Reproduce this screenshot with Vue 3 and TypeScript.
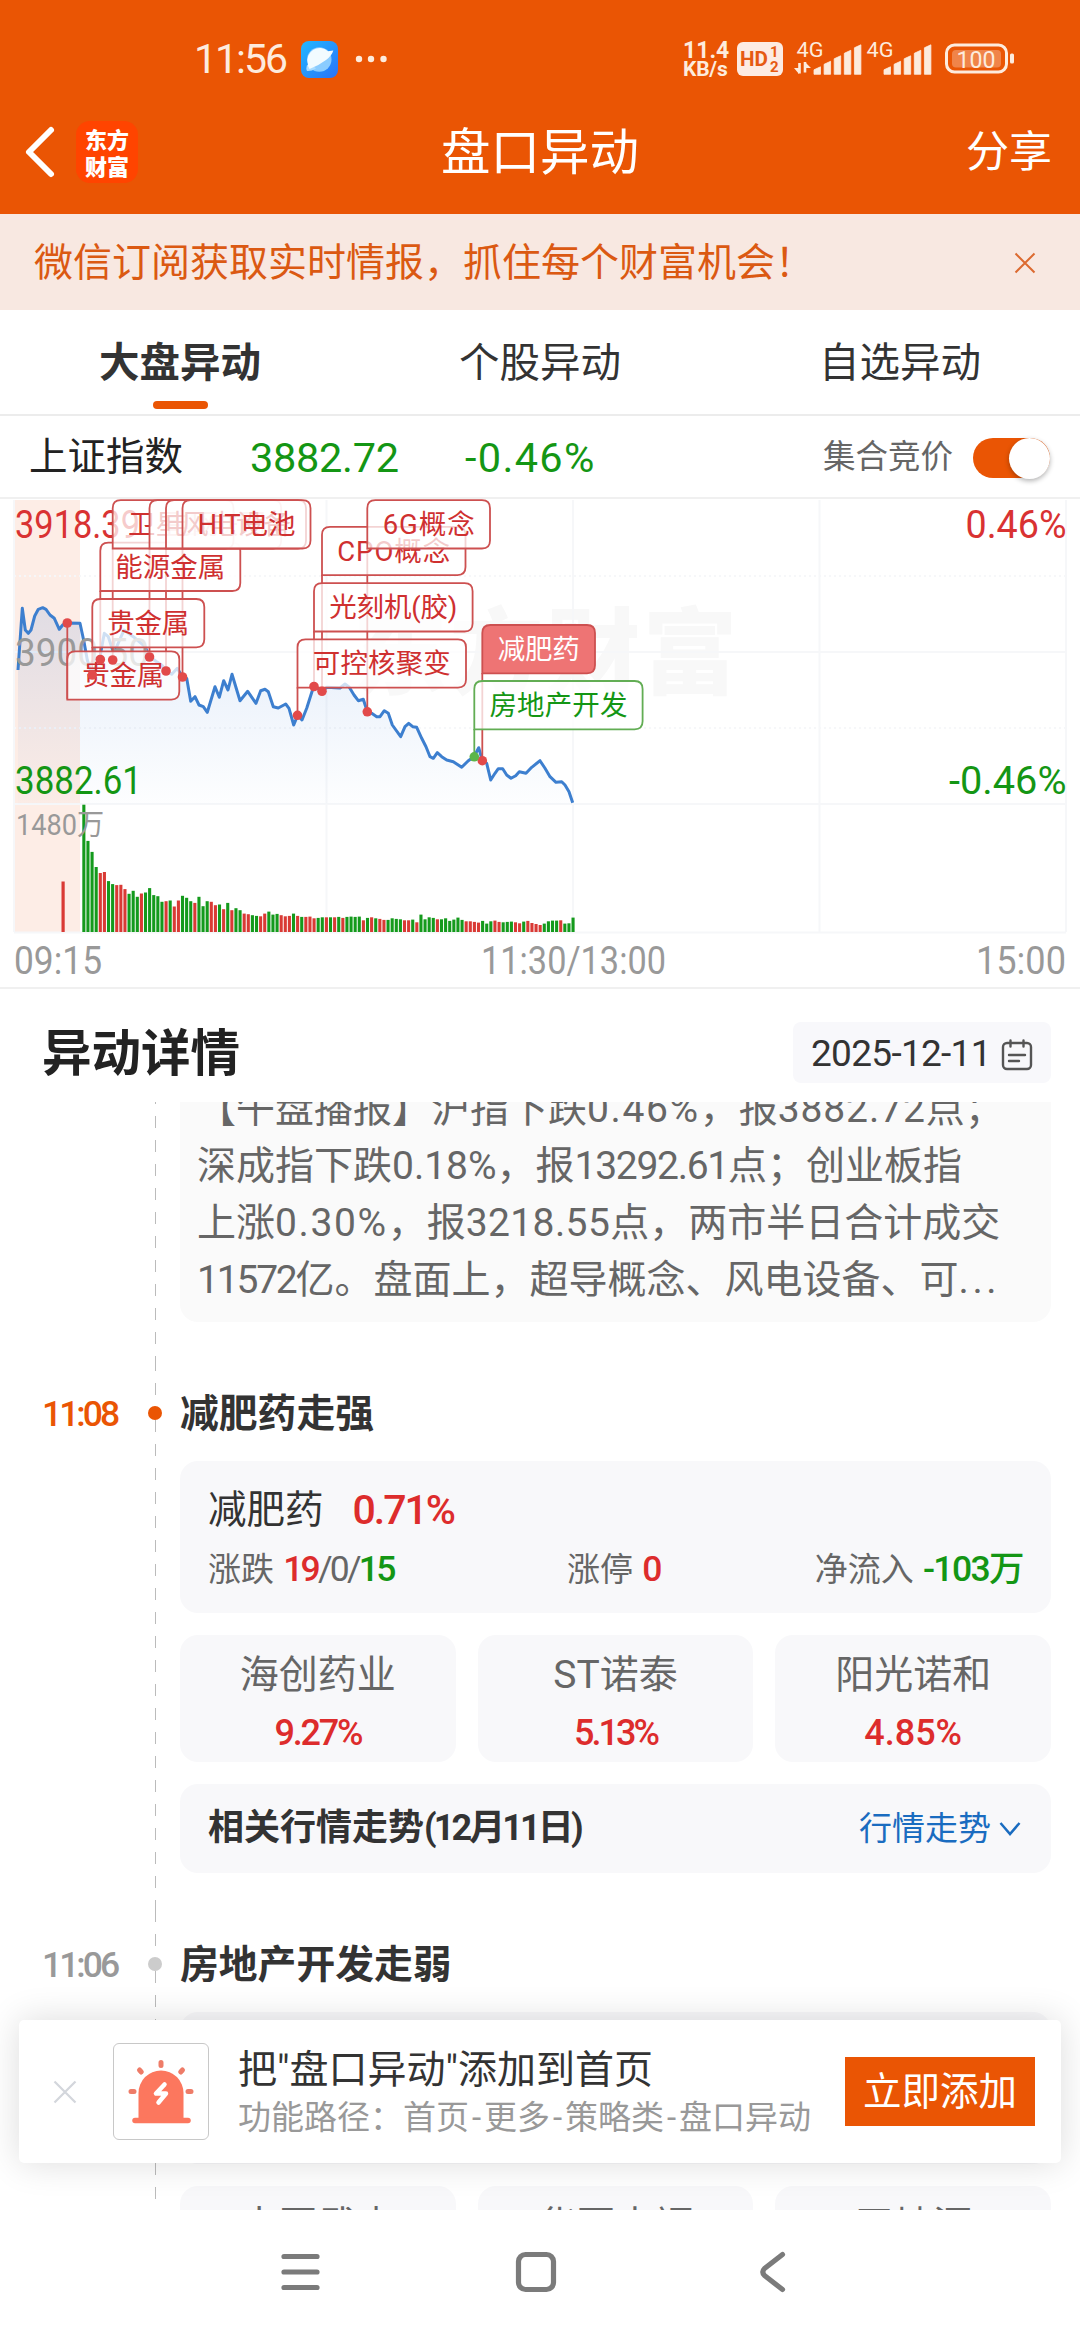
<script setup lang="ts">
interface Run { t: string; c?: string }
interface Tag { x: number; y: number; w: number; dy: number; label: string; tw: number; kind?: string }
interface Stock { name: string; pct?: string; c?: string }

const tabs = ['大盘异动', '个股异动', '自选异动']

const news: Run[][] = [
  [{ t: '【午盘播报】沪指下跌' }, { t: '0.46%', c: 'w2' }, { t: '，报' }, { t: '3882.72', c: 'w1' }, { t: '点；' }],
  [{ t: '深成指下跌0.18%，报' }, { t: '13292.61', c: 't1' }, { t: '点；创业板指' }],
  [{ t: '上涨' }, { t: '0.30%', c: 'w2' }, { t: '，报' }, { t: '3218.55', c: 'w0' }, { t: '点，两市半日合计成交' }],
  [{ t: '11572', c: 't2' }, { t: '亿。盘面上，超导概念、风电设备、可' }, { t: '...', c: 'w3' }],
]

const stocks: Stock[] = [
  { name: '海创药业', pct: '9.27%', c: 't2' },
  { name: 'ST诺泰', pct: '5.13%', c: 't3' },
  { name: '阳光诺和', pct: '4.85%', c: 't0' },
]
const weakStocks: Stock[] = [{ name: '中国武夷' }, { name: '华夏幸福' }, { name: '天地源' }]

// Intraday price, as x,y pairs in chart units
const pricePoints: number[][] = [
  [18, 180], [22.3, 118.3], [25.3, 140], [28.3, 143.3], [31, 140], [34.7, 126], [38.3, 119.3], [42.7, 117.7], [46, 119.3],
  [50, 125], [54.3, 128.3], [59.3, 139.3], [62.7, 135], [67.3, 133], [80, 133.3], [84, 151.7], [87.3, 170], [92, 185],
  [100, 166.7], [104.3, 143.3], [108.3, 146.7], [112.7, 160], [116.7, 156.7], [124, 140], [133.3, 146.7], [145, 156.7],
  [149.7, 166.7], [156.7, 171.7], [161.7, 175], [166, 180.3], [171.7, 184.3], [177.3, 178.3], [182.3, 186.7], [186.7, 188.3],
  [190.7, 211.3], [195, 206.7], [199, 215], [203.3, 216.7], [207.3, 222.3], [215, 196.7], [219.3, 207.3], [223.7, 190.7],
  [228, 200], [232, 184.3], [240, 210.7], [247.7, 201.3], [256, 213.3], [260.7, 200.7], [265, 199.3], [268.3, 201.7],
  [273.3, 216.7], [278.3, 218], [285.7, 214], [289, 218.3], [293.7, 235], [297.7, 225.3], [302, 230], [306.7, 218.3],
  [313.7, 196.3], [322, 201.3], [326.7, 197.3], [340, 198], [345, 194], [349.3, 197.3], [354, 205], [358.3, 210.7],
  [363.3, 209.3], [367.3, 221.7], [371.7, 223.3], [376.7, 226.7], [380, 226.7], [384.3, 220.7], [388.3, 223.3], [392.3, 235],
  [400.7, 246.7], [405, 236.7], [408.7, 233.3], [412.7, 236.7], [416.7, 237.3], [421.7, 248.3], [426, 256.7], [430, 266.7],
  [433.3, 268.3], [437.3, 262.7], [441.7, 266.7], [446.7, 270], [453.3, 271.7], [461.7, 277.3], [468.3, 270.7], [474, 266.7],
  [478.7, 257.7], [482.3, 270.7], [486.7, 273.3], [490.7, 290], [495, 283.3], [498.3, 278.7], [502.7, 278.7], [506.7, 285],
  [511, 288.3], [515.7, 285.7], [519.3, 281.7], [526, 283.3], [531.7, 277.3], [540, 270.7], [545, 278.3], [550, 286.7],
  [556, 292.3], [561.7, 291.7], [565, 295], [569, 301.7], [572.7, 312.7],
]
const priceLine = pricePoints.map((p) => p.join(',')).join(' ')
const priceArea = `18,314 ${priceLine} 572.7,314`

// Minute volumes: height in tenths of a pixel, with the direction of each bar
const volumes = [
  1273, 911, 801, 650, 590, 600, 509, 479, 469, 472, 429, 382, 412, 352, 385, 395, 439, 369, 358, 302, 308, 315, 255, 315,
  362, 342, 308, 291, 352, 258, 308, 302, 268, 275, 228, 291, 218, 238, 218, 184, 178, 168, 161, 157, 184, 204, 174, 181,
  168, 157, 161, 184, 161, 151, 151, 154, 137, 141, 147, 147, 147, 147, 151, 141, 151, 154, 151, 154, 117, 141, 147, 137,
  131, 121, 121, 137, 131, 127, 117, 117, 124, 97, 174, 127, 147, 141, 127, 127, 137, 111, 124, 144, 121, 107, 107, 101,
  94, 111, 84, 107, 114, 101, 97, 101, 104, 97, 87, 104, 111, 90, 80, 70, 84, 107, 114, 114, 117, 84, 87, 144,
]
const directions =
  'ggggrrggrrrgggrgggggrgrrgggrgggrrgrgrggrrggrrgggrrrgrgrrrggrgrgrggggrgrgrrggggrrgrggggrggggggrrrrgggrrgggrrgrrrrggggrggg'
const bars = volumes.map((v, i) => ({
  x: 82.3 + i * 4.111,
  h: v / 10,
  fill: directions[i] === 'r' ? '#d93a35' : '#149a1c',
}))

const tags: Tag[] = [
  { x: 67.3, y: 161.3, w: 112, dy: 133, label: '贵金属', tw: 82 },
  { x: 92.3, y: 109, w: 112, dy: 185, label: '贵金属', tw: 82 },
  { x: 100.3, y: 52.7, w: 140, dy: 169.5, label: '能源金属', tw: 110 },
  { x: 112.7, y: 10.2, w: 168.5, dy: 170, label: '卫星互联网', tw: 138 },
  { x: 149.5, y: 10.2, w: 84, dy: 167, label: '电网', tw: 55 },
  { x: 166, y: 10.2, w: 140, dy: 181, label: '风电设备', tw: 110 },
  { x: 182.5, y: 10.2, w: 128, dy: 187, label: 'HIT电池', tw: 98 },
  { x: 322, y: 36.8, w: 143.5, dy: 201.3, label: 'CPO概念', tw: 113 },
  { x: 314, y: 93.2, w: 158.6, dy: 196.5, label: '光刻机(胶)', tw: 128 },
  { x: 297.5, y: 149.3, w: 168.5, dy: 225.3, label: '可控核聚变', tw: 138 },
  { x: 367.3, y: 10.2, w: 122.7, dy: 221.8, label: '6G概念', tw: 92 },
  { x: 482.3, y: 135, w: 112.7, dy: 270.7, label: '减肥药', tw: 82, kind: 'solid' },
  { x: 474.3, y: 191, w: 168.3, dy: 266.8, label: '房地产开发', tw: 138, kind: 'green' },
]
const tagPath = (t: Tag): string => {
  const r = 8
  const h = 48.3
  return `M${t.x} ${t.y + h}V${t.y + r}q0 ${-r} ${r} ${-r}h${t.w - 2 * r}q${r} 0 ${r} ${r}v${h - 2 * r}q0 ${r} ${-r} ${r}Z`
}
const tagStroke = (t: Tag): string => (t.kind === 'green' ? '#62ad54' : '#cd5050')
const dotFill = (t: Tag): string => (t.kind === 'green' ? '#5bb548' : '#e24a4a')
const signal = [7.5, 13, 18.5, 24, 29.5]
</script>

<template>
  <div class="screen">
    <header class="top">
      <div class="status">
        <span class="clock">11:56</span>
        <svg class="planet" width="37" height="37" viewBox="0 0 37 37">
          <defs>
            <linearGradient id="sky" x1="0" y1="0" x2="1" y2="1">
              <stop offset="0" stop-color="#22b8ff" /><stop offset="1" stop-color="#2a72f8" />
            </linearGradient>
          </defs>
          <rect width="37" height="37" rx="8" fill="url(#sky)" />
          <circle cx="18.3" cy="18.5" r="12.2" fill="#8accff" />
          <path d="M5.8 24.5Q4.8 28 6 30Q10 30.5 15 27.5L9 22Z" fill="#a9dcff" />
          <path d="M6.8 22.5A12.3 12.3 0 0 1 27 10.2L32.3 9.5Q31 14.5 25 19Q17 25 8.5 28Q6.5 25 6.8 22.5Z" fill="#f2fbff" />
        </svg>
        <svg class="dots" width="32" height="8" viewBox="0 0 32 8" fill="#fdebdd">
          <circle cx="4" cy="4" r="3.2" /><circle cx="16" cy="4" r="3.2" /><circle cx="28.5" cy="4" r="3.2" />
        </svg>
        <div class="rate"><span>11.4</span><span class="unit">KB/s</span></div>
        <svg class="radio" width="286" height="40" viewBox="0 0 286 40" font-family="Roboto, sans-serif">
          <rect x="3" y="3" width="46" height="34" rx="6" fill="#fdebe2" />
          <g fill="#e65a12" font-weight="700">
            <text x="6" y="27" font-size="20" textLength="28" lengthAdjust="spacingAndGlyphs">HD</text>
            <text x="36" y="18" font-size="15">1</text>
            <text x="36" y="33" font-size="15">2</text>
          </g>
          <g v-for="o in [0, 70]" :key="o" fill="#fdebdd">
            <text :x="62.5 + o" y="18" font-size="21" textLength="27" lengthAdjust="spacingAndGlyphs">4G</text>
            <path
              v-for="(h, i) in signal"
              :key="i"
              :d="`M${80 + o + i * 10.1} ${35.3 - h + 3} l6.5 -3 v${h} h-6.5Z`"
              stroke="#fdebdd"
              stroke-width="0.8"
              stroke-linejoin="round"
            />
          </g>
          <path d="M65.5 24v10.5M71 23v10.5" stroke="#fdebdd" stroke-width="2.6" fill="none" />
          <path d="M60 29h5v6zM71 23l6 6h-5z" fill="#fdebdd" />
          <rect x="212.5" y="6" width="60" height="27" rx="8" fill="none" stroke="#fdebdd" stroke-width="3" />
          <rect x="218" y="11" width="49" height="17.5" rx="4" fill="#fff" fill-opacity="0.28" />
          <rect x="276" y="14.5" width="4" height="10" rx="1.5" fill="#fdebdd" />
          <text x="242" y="28.5" font-size="24" fill="#fdebdd" text-anchor="middle" textLength="39" lengthAdjust="spacingAndGlyphs">100</text>
        </svg>
      </div>
      <div class="titlebar">
        <div class="left">
          <svg width="34" height="54" viewBox="0 0 34 54">
            <path d="M28 5 L6 27 L28 49" fill="none" stroke="#fff" stroke-width="6" stroke-linecap="round" stroke-linejoin="round" />
          </svg>
          <div class="logo"><span>东方</span><span>财富</span></div>
        </div>
        <h1>盘口异动</h1>
        <span class="share">分享</span>
      </div>
    </header>

    <div class="notice">
      <span>微信订阅获取实时情报，抓住每个财富机会！</span>
      <svg width="22" height="22" viewBox="0 0 22 22"><path d="M1.5 1.5l19 19M20.5 1.5l-19 19" stroke="#dc6a30" stroke-width="2" /></svg>
    </div>

    <nav class="tabs">
      <div v-for="(t, i) in tabs" :key="t" class="tab" :class="{ on: i === 0 }">{{ t }}</div>
    </nav>

    <div class="index">
      <span class="iname">上证指数</span>
      <span class="ival">3882.72</span>
      <span class="ichg">-0.46%</span>
      <span class="auction">集合竞价</span>
      <span class="switch"><i></i></span>
    </div>

    <div class="chart">
      <svg width="1080" height="488" viewBox="0 0 1080 488" font-family="Roboto, 'Noto Sans CJK SC', sans-serif">
        <defs>
          <linearGradient id="fade" x1="0" y1="0" x2="0" y2="1">
            <stop offset="0" stop-color="#3f7fd8" stop-opacity="0.15" />
            <stop offset="1" stop-color="#3f7fd8" stop-opacity="0.01" />
          </linearGradient>
        </defs>
        <text x="353" y="197" font-size="94" font-weight="900" fill="#f8f8f8" textLength="384" font-family="'Noto Sans CJK SC', sans-serif">东方财富</text>
        <rect x="14" y="10" width="66" height="303" fill="#fdede6" />
        <rect x="14" y="315" width="66" height="127" fill="#fdede6" />
        <g stroke="#f6f7f9" stroke-width="2" fill="none">
          <path d="M14 10V442M326.5 10V442M573 10V442M819.5 10V442M1066 10V442" />
          <path d="M14 162H1066M14 314H1066M14 442.5H1066" />
          <path d="M14 86H1066M14 238H1066" stroke-dasharray="2 3" />
        </g>
        <polygon :points="priceArea" fill="url(#fade)" />
        <polyline :points="priceLine" fill="none" stroke="#3d7fcf" stroke-width="3" stroke-linejoin="round" />
        <g fill="#999" font-size="38">
          <text x="15" y="176" textLength="134" lengthAdjust="spacingAndGlyphs">3900.50</text>
          <text x="14" y="484" textLength="88" lengthAdjust="spacingAndGlyphs">09:15</text>
          <text x="481" y="484" textLength="185" lengthAdjust="spacingAndGlyphs">11:30/13:00</text>
          <text x="976" y="484" textLength="90" lengthAdjust="spacingAndGlyphs">15:00</text>
        </g>
        <g font-size="38.5">
          <text x="15" y="47.5" fill="#d93232" textLength="125" lengthAdjust="spacingAndGlyphs">3918.39</text>
          <text x="965.5" y="47.5" fill="#d93232" textLength="101" lengthAdjust="spacingAndGlyphs">0.46%</text>
          <text x="15" y="304" fill="#149614" textLength="127" lengthAdjust="spacingAndGlyphs">3882.61</text>
          <text x="949" y="304" fill="#149614" textLength="117.5" lengthAdjust="spacingAndGlyphs">-0.46%</text>
        </g>
        <rect x="61.5" y="391.5" width="3.2" height="50.5" fill="#d93a35" />
        <rect v-for="(b, i) in bars" :key="i" :x="b.x" :y="442 - b.h" width="3.1" :height="b.h" :fill="b.fill" />
        <text x="16" y="344.5" font-size="29" fill="#999" textLength="88" lengthAdjust="spacingAndGlyphs">1480万</text>

        <path v-for="(t, i) in tags" :key="'s' + i" :d="`M${t.x} ${t.y + 48}V${t.dy}`" :stroke="tagStroke(t)" stroke-width="1.8" />
        <g v-for="(t, i) in tags" :key="'t' + i">
          <path
            :d="tagPath(t)"
            :fill="t.kind === 'solid' ? '#ee7474' : '#fff'"
            :fill-opacity="t.kind === 'solid' ? 1 : 0.75"
            :stroke="tagStroke(t)"
            stroke-width="1.8"
          />
          <text
            :x="t.x + t.w / 2"
            :y="t.y + 34"
            font-size="27.5"
            text-anchor="middle"
            :textLength="t.tw"
            :fill="t.kind === 'solid' ? '#fff' : t.kind === 'green' ? '#149614' : '#cf3030'"
          >{{ t.label }}</text>
        </g>
        <circle v-for="(t, i) in tags" :key="'d' + i" :cx="t.x" :cy="t.dy" r="4.8" :fill="dotFill(t)" />
      </svg>
    </div>

    <div class="dhead">
      <h2>异动详情</h2>
      <div class="date">
        <span>2025-12-11</span>
        <svg width="32" height="32" viewBox="0 0 32 32" fill="none" stroke="#555" stroke-width="2.4" stroke-linecap="round">
          <rect x="2" y="4" width="28" height="26" rx="4" />
          <path d="M9.5 1.5v6M22.5 1.5v6M8 16h16M8 22h10" />
        </svg>
      </div>
    </div>

    <main class="list">
      <section class="item first">
        <div class="time"></div>
        <div class="rail"><i class="dash"></i></div>
        <div class="body">
          <div class="news">
            <p v-for="(line, i) in news" :key="i"><span v-for="(r, j) in line" :key="j" :class="r.c">{{ r.t }}</span></p>
          </div>
        </div>
      </section>

      <section class="item">
        <div class="time now">11:08</div>
        <div class="rail"><i class="lead"></i><i class="dot now"></i><i class="dash"></i></div>
        <div class="body">
          <h3>减肥药走强</h3>
          <div class="card stat">
            <div class="l1"><span>减肥药</span><b class="red">0.71%</b></div>
            <div class="l2">
              <span class="updown">涨跌 <em class="t3"><b class="red">19</b>/0/<b class="green">15</b></em></span>
              <span class="limit">涨停 <em><b class="red">0</b></em></span>
              <span>净流入 <em><b class="green">-103万</b></em></span>
            </div>
          </div>
          <div class="stocks">
            <div v-for="s in stocks" :key="s.name" class="card stock"><span>{{ s.name }}</span><b :class="s.c">{{ s.pct }}</b></div>
          </div>
          <div class="card trend">
            <span class="tt">相关行情走势<span class="day">(12月11日)</span></span>
            <span class="more">行情走势</span>
            <svg width="22" height="16" viewBox="0 0 22 16"><path d="M1.5 2l9.5 11 9.5-11" fill="none" stroke="#1a6cc0" stroke-width="2.5" /></svg>
          </div>
        </div>
      </section>

      <section class="item">
        <div class="time">11:06</div>
        <div class="rail"><i class="lead"></i><i class="dot"></i><i class="dash"></i></div>
        <div class="body">
          <h3>房地产开发走弱</h3>
          <div class="card stat"></div>
          <div class="stocks">
            <div v-for="s in weakStocks" :key="s.name" class="card stock"><span>{{ s.name }}</span></div>
          </div>
        </div>
      </section>
    </main>

    <div class="toast">
      <svg class="tclose" width="24" height="24" viewBox="0 0 24 24"><path d="M1.5 1.5l21 21M22.5 1.5l-21 21" stroke="#d3d6dc" stroke-width="2.2" /></svg>
      <div class="ticon">
        <svg width="94" height="94" viewBox="0 0 94 94">
          <path d="M24.5 78V49a22.5 22.5 0 0 1 45 0V78Z" fill="#fc775e" />
          <path d="M21 76.5H74" stroke="#fc775e" stroke-width="5.5" stroke-linecap="round" />
          <g stroke="#ee7c68" stroke-width="5" stroke-linecap="round">
            <path d="M47 18.5v3M25.5 26l1.8 2M68.5 26l-1.8 2M17 47.5h3M74 47.5h3" />
          </g>
          <path d="M50.5 40.5L42 49.5H52L44.5 58.5" fill="none" stroke="#fff" stroke-width="4.5" stroke-linecap="round" stroke-linejoin="round" />
        </svg>
      </div>
      <div class="ttext">
        <div class="t1l">把"盘口异动"添加到首页</div>
        <div class="t2l">功能路径：首页<s>-</s>更多<s>-</s>策略类<s>-</s>盘口异动</div>
      </div>
      <div class="tbtn">立即添加</div>
    </div>

    <footer class="nav">
      <svg width="1080" height="130" viewBox="0 0 1080 130" fill="none" stroke="#7b7b7b" stroke-width="5.2" stroke-linecap="round" stroke-linejoin="round">
        <path d="M284 46.5H317M284 62H317M284 77.5H317" />
        <rect x="518.5" y="44.5" width="35" height="35" rx="7" />
        <path d="M782.5 44.5L764.5 58.5Q761 62 764.5 65.5L782.5 79.5" />
      </svg>
    </footer>
  </div>
</template>

<style>
body { margin: 0; background: #fff; }
</style>

<style scoped>
.screen { width: 1080px; height: 2340px; overflow: hidden; position: relative; display: flex; flex-direction: column; background: #fff; font-family: Roboto, 'Noto Sans CJK SC', sans-serif; line-height: 1.2; color: #333; }
.screen > * { flex: none; box-sizing: border-box; }
h1, h2, h3, p { margin: 0; font-weight: 400; }
i, em, s { font-style: normal; text-decoration: none; }
svg { display: block; flex: none; overflow: visible; }

.top { height: 214px; background: #ea5504; color: #fff; }
.status { height: 79px; padding: 39px 62px 0 194px; box-sizing: border-box; display: flex; align-items: center; color: #fdebdd; }
.clock { font-size: 41px; line-height: 40px; width: 107px; flex: none; letter-spacing: -2px; }
.dots { margin-left: 17px; }
.rate { margin-left: 296px; width: 51px; flex: none; display: flex; flex-direction: column; font-weight: 700; font-size: 23px; line-height: 19px; padding-top: 2px; }
.unit { font-size: 21px; line-height: 19px; letter-spacing: -0.2px; }
.titlebar { height: 135px; margin-top: 5px; display: grid; grid-template-columns: 1fr auto 1fr; align-items: center; padding: 0 28px 0 23px; box-sizing: border-box; }
.left { display: flex; align-items: center; gap: 19px; }
.logo { width: 62px; height: 62px; border-radius: 14px; background: #ff4400; display: flex; flex-direction: column; justify-content: center; align-items: center; font-family: 'Noto Sans CJK SC', sans-serif; font-weight: 900; font-size: 22px; line-height: 27px; }
h1 { font-size: 49.5px; line-height: 60px; padding: 2px 0 0 5px; }
.share { justify-self: end; font-size: 43px; line-height: 60px; }

.notice { height: 96px; background: #f8e8e1; color: #db5912; font-size: 39px; display: flex; align-items: center; justify-content: space-between; padding: 2px 44px 0 34px; white-space: nowrap; }
.tabs { height: 106px; border-bottom: 2px solid #ececec; display: flex; }
.tab { flex: 1; text-align: center; font-size: 40.5px; line-height: 106px; color: #333; display: flex; flex-direction: column; align-items: center; }
.tab.on { font-weight: 700; }
.tab.on::after { content: ''; width: 55px; height: 8px; border-radius: 4px; background: #ea5504; margin-top: -15px; }

.index { height: 83px; border-bottom: 2px solid #f0f0f0; display: flex; align-items: center; padding: 2px 30px 0 29px; font-size: 38.5px; }
.iname { width: 221px; color: #222; }
.ival { width: 215px; font-size: 41.5px; color: #149614; letter-spacing: -0.3px; }
.ichg { flex: 1; font-size: 41.5px; color: #149614; letter-spacing: 1.3px; }
.auction { font-size: 32.5px; color: #666; }
.switch { width: 77px; height: 40px; border-radius: 20px; background: #ea5504; margin-left: 20px; display: flex; justify-content: flex-end; }
.switch i { width: 41px; height: 41px; border-radius: 50%; background: #fff; box-shadow: 0 2px 5px rgba(0, 0, 0, 0.3); }

.chart { height: 499px; margin-top: -9px; border-bottom: 2px solid #f0f0f0; }

.dhead { height: 113px; display: flex; align-items: center; justify-content: space-between; padding: 14px 29px 0 42px; }
h2 { font-size: 49.5px; font-weight: 700; color: #222; line-height: 70px; padding-top: 2px; }
.date { height: 61px; width: 258px; border-radius: 8px; background: #f8f8fb; display: flex; align-items: center; justify-content: space-between; padding: 4px 18px 0; box-sizing: border-box; font-size: 37px; letter-spacing: -0.7px; }

.list { height: 1108px; overflow: hidden; }
.item { display: flex; padding: 0 29px 0 42px; }
.item.first { margin-top: -38px; }
.time { width: 106px; flex: none; font-size: 35.5px; font-weight: 500; line-height: 40px; padding-top: 35px; letter-spacing: -3px; color: #999; box-sizing: border-box; }
.time.now { color: #ea5504; }
.rail { width: 14px; flex: none; display: flex; flex-direction: column; align-items: center; margin-right: 18px; }
.lead, .dash { width: 1px; background: repeating-linear-gradient(#bbb 0 12px, transparent 12px 24px); }
.lead { height: 47px; }
.dash { flex: 1; }
.first .dash { flex: none; height: 295px; background: repeating-linear-gradient(transparent 0 4px, #bbb 4px 16px, transparent 16px 24px); }
.dot { width: 14px; height: 14px; border-radius: 50%; background: #ccc; }
.dot.now { background: #ea5504; }
.body { flex: 1; padding-bottom: 37px; }
.news { background: #fafafa; border-radius: 18px; padding: 17px 17px 14px; height: 258px; box-sizing: border-box; font-size: 39px; color: #666; white-space: nowrap; }
.news p { line-height: 57px; height: 57px; }
.w0 { letter-spacing: 0.4px; }
.w1 { letter-spacing: 0.9px; }
.w2 { letter-spacing: 1.6px; }
.w3 { letter-spacing: 3.5px; }
.t1 { letter-spacing: -1.3px; }
.t2 { letter-spacing: -2.2px; }
h3 { height: 102px; font-size: 38.8px; font-weight: 700; line-height: 110px; color: #333; white-space: nowrap; }
.card { background: #f8f8fa; border-radius: 18px; box-sizing: border-box; }
.red { color: #dd2c2c; font-weight: 500; }
.green { color: #149614; font-weight: 500; }
.stat { height: 152px; padding: 18px 28px 0; }
.l1 { font-size: 38.5px; line-height: 62px; height: 62px; display: flex; gap: 29px; }
.l1 b { font-size: 41px; letter-spacing: -2px; }
.l2 { display: flex; font-size: 33px; line-height: 56px; color: #666; white-space: nowrap; }
.l2 em { font-size: 35.5px; letter-spacing: -1.6px; margin-left: 1px; }
.l2 .t3 { letter-spacing: -2.8px; }
.updown { width: 359px; }
.limit { flex: 1; }
.stocks { display: flex; gap: 22px; margin-top: 22px; }
.stock { flex: 1; height: 127px; display: flex; flex-direction: column; align-items: center; font-size: 39px; color: #666; padding-top: 11px; line-height: 58px; }
.stock b { color: #dd2c2c; font-weight: 500; font-size: 36px; line-height: 58px; }
.stock .t3 { letter-spacing: -3px; }
.stock .t0 { letter-spacing: 0; }
.trend { margin-top: 22px; height: 89px; display: flex; align-items: center; padding: 1px 30px 0 28px; }
.tt { flex: 1; font-size: 36px; font-weight: 700; }
.day { letter-spacing: -2.9px; }
.more { font-size: 33px; color: #1a6cc0; margin-right: 8px; }

.toast { position: absolute; left: 19px; top: 2020px; width: 1042px; height: 143px; border-radius: 5px; background: #fff; box-shadow: 0 0 36px rgba(0, 0, 0, 0.14); display: flex; align-items: center; padding: 0 26px 0 34px; }
.ticon { width: 96px; height: 97px; border: 1px solid #c8c8c8; border-radius: 6px; box-sizing: border-box; margin-left: 36px; }
.ttext { margin-left: 29px; flex: 1; white-space: nowrap; padding-top: 2px; }
.t1l { font-size: 39px; line-height: 50px; color: #333; }
.t2l { font-size: 33px; line-height: 46px; color: #999; }
.t2l s { display: inline-block; width: 15px; text-align: center; }
.tbtn { width: 190px; height: 69px; background: #ea5504; color: #fff; font-size: 38.5px; line-height: 69px; text-align: center; }
.nav { height: 130px; background: #fff; }
</style>
